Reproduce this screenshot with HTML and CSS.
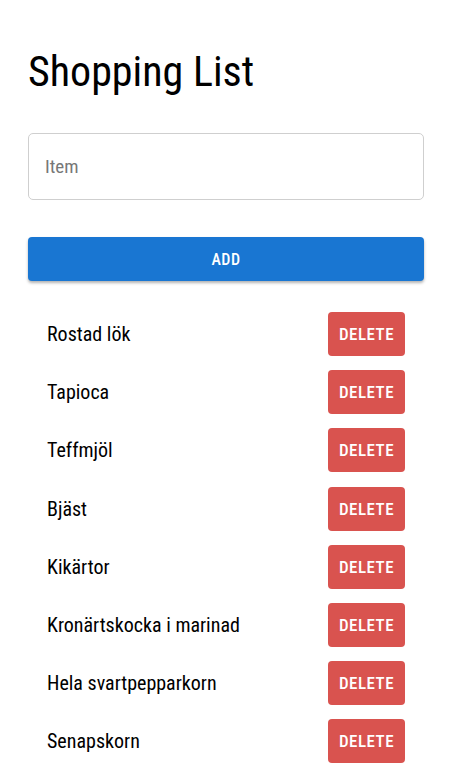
FILE: index.html
```html
<!DOCTYPE html>
<html lang="sv">
<head>
<meta charset="utf-8">
<title>Shopping List</title>
<link rel="stylesheet" href="styles.css">
</head>
<body>
<main class="app">
  <h1 class="title">Shopping List</h1>
  <input class="field" type="text" placeholder="Item">
  <button class="add">ADD</button>
  <ul class="list">
    <li class="row"><span class="name">Rostad lök</span><button class="del">DELETE</button></li>
    <li class="row"><span class="name">Tapioca</span><button class="del">DELETE</button></li>
    <li class="row"><span class="name">Teffmjöl</span><button class="del">DELETE</button></li>
    <li class="row"><span class="name">Bjäst</span><button class="del">DELETE</button></li>
    <li class="row"><span class="name">Kikärtor</span><button class="del">DELETE</button></li>
    <li class="row"><span class="name">Kronärtskocka i marinad</span><button class="del">DELETE</button></li>
    <li class="row"><span class="name">Hela svartpepparkorn</span><button class="del">DELETE</button></li>
    <li class="row"><span class="name">Senapskorn</span><button class="del">DELETE</button></li>
  </ul>
</main>
</body>
</html>
```

FILE: styles.css
```css
* { box-sizing: border-box; }
body {
  margin: 0;
  font-family: Roboto, "Liberation Sans", sans-serif;
  font-stretch: 75%;
  color: #000;
  background: #fff;
}
.app {
  padding: 0 29px 0 28px;
  display: flex;
  flex-direction: column;
}
.title {
  margin: 43px 0 0;
  font-size: 42px;
  font-weight: 400;
  line-height: 58px;
}
.field {
  margin-top: 32px;
  height: 67px;
  width: 100%;
  border: 1px solid #cfcfcf;
  border-radius: 5px;
  padding: 0 16px;
  font: inherit;
  font-stretch: 75%;
  font-size: 19px;
  outline: none;
}
.field::placeholder { color: #777; }
.add {
  margin-top: 37px;
  height: 44px;
  width: 100%;
  border: none;
  border-radius: 4px;
  background: #1976d2;
  color: #fff;
  font-family: inherit;
  font-stretch: 75%;
  font-size: 16px;
  font-weight: 500;
  letter-spacing: 0.5px;
  box-shadow: 0 2px 3px rgba(0,0,0,0.3);
}
.list {
  list-style: none;
  margin: 31px 0 0;
  padding: 0 19px;
  display: flex;
  flex-direction: column;
  gap: 14.2px;
}
.row {
  display: flex;
  align-items: center;
  justify-content: space-between;
  height: 44px;
}
.name { font-size: 20px; }
.del {
  width: 77px;
  height: 44px;
  border: none;
  border-radius: 4px;
  background: #d9534f;
  color: #fff;
  font-family: inherit;
  font-stretch: 75%;
  font-size: 17px;
  font-weight: 500;
  letter-spacing: 0.5px;
}
```
